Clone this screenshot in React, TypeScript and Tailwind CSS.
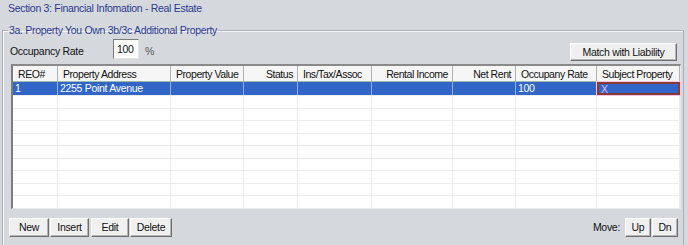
import React from 'react';

const navy = 'text-[#2b3990]';

const columns = [
  { label: 'REO#', w: 'w-[45px]', align: 'text-left' },
  { label: 'Property Address', w: 'w-[113px]', align: 'text-left' },
  { label: 'Property Value', w: 'w-[73px]', align: 'text-left' },
  { label: 'Status', w: 'w-[54px]', align: 'text-right' },
  { label: 'Ins/Tax/Assoc', w: 'w-[74px]', align: 'text-left' },
  { label: 'Rental Income', w: 'w-[81px]', align: 'text-right' },
  { label: 'Net Rent', w: 'w-[63px]', align: 'text-right' },
  { label: 'Occupany Rate', w: 'w-[81px]', align: 'text-left' },
  { label: 'Subject Property', w: 'w-[83px]', align: 'text-left' },
];

const selected = ['1', '2255 Point Avenue', '', '', '', '', '', '100', 'X'];

function WinButton({ children, className = '' }: { children: React.ReactNode; className?: string }) {
  return (
    <button
      className={`flex items-center justify-center bg-[#f0f0f0] border border-t-white border-l-white border-r-[#6e6e6e] border-b-[#6e6e6e] shadow-[inset_-1px_-1px_0_#b4b4b4] text-[#111] ${className}`}
    >
      {children}
    </button>
  );
}

export default function App() {
  return (
    <div
      className="w-[688px] h-[245px] overflow-hidden bg-[#d5d9de] text-[10.5px] tracking-[-0.3px] leading-[12px] text-[#111]"
      style={{ fontFamily: '"Liberation Sans", Arial, sans-serif' }}
    >
      <div className={`h-[24px] pl-[8px] pt-[2px] ${navy}`}>Section 3: Financial Infomation - Real Estate</div>

      <fieldset className="ml-[2px] mr-[4px] border border-[#aab1ba] shadow-[inset_1px_1px_0_#f6f7f9]">
        <legend className={`ml-[5px] px-[1px] ${navy}`}>3a. Property You Own 3b/3c Additional Property</legend>

        <div className="flex h-[22px] mt-[3px] pl-[7px] pr-[6px]">
          <span className="self-center mt-[1px] w-[103px]">Occupancy Rate</span>
          <div className="self-start h-[20px] w-[26px] bg-white border border-t-[#7a7a7a] border-l-[#7a7a7a] border-r-[#e4e4e4] border-b-[#e4e4e4] pl-[3px] pt-[3px]">
            100
          </div>
          <span className="self-center mt-[1px] ml-[6px] text-[#555]">%</span>
          <WinButton className="ml-auto self-end h-[18px] w-[107px]">Match with Liability</WinButton>
        </div>

        <div className="mt-[3px] ml-[8px] mr-[2px] bg-white border-l-2 border-t-2 border-l-[#7d7d7d] border-t-[#8a8a8a] border-r border-b border-r-[#e9e9e9] border-b-[#e9e9e9]">
          <div className="flex h-[16px] border-b border-b-[#9fbca6] bg-[#f6f6f6] tracking-[-0.45px]">
            {columns.map((c) => (
              <div
                key={c.label}
                className={`${c.w} ${c.align} shrink-0 pl-[5px] pr-[4px] pt-[2px] border-r border-r-[#b2b2b2] overflow-hidden whitespace-nowrap`}
              >
                {c.label}
              </div>
            ))}
          </div>
          <div className="flex h-[13px] bg-[#3166c8] text-white">
            {columns.map((c, i) =>
              i === 8 ? (
                <div key={c.label} className={`${c.w} shrink-0 border-2 border-[#8c3a2f] shadow-[0_0_0_1px_#f3c6ee] pl-[2px] leading-[10px] text-[#e6b6ff]`}>
                  {selected[i]}
                </div>
              ) : (
                <div key={c.label} className={`${c.w} shrink-0 pl-[2px] border-r border-r-[#8fb1e6]`}>
                  {selected[i]}
                </div>
              )
            )}
          </div>
          {Array.from({ length: 9 }).map((_, r) => (
            <div key={r} className="flex h-[12.5px] border-t border-t-[#ececec]">
              {columns.map((c) => (
                <div key={c.label} className={`${c.w} shrink-0 border-r border-r-[#ececec]`} />
              ))}
            </div>
          ))}
        </div>

        <div className="flex items-center mt-[9px] pl-[6px] pr-[5px] h-[19px] mb-[10px]">
          <WinButton className="w-[40px] h-[19px]">New</WinButton>
          <WinButton className="w-[39px] h-[19px] ml-[1px]">Insert</WinButton>
          <WinButton className="w-[38px] h-[19px] ml-[2px]">Edit</WinButton>
          <WinButton className="w-[42px] h-[19px] ml-[1px]">Delete</WinButton>
          <span className="ml-auto mr-[5px]">Move:</span>
          <WinButton className="w-[26px] h-[19px]">Up</WinButton>
          <WinButton className="w-[26px] h-[19px] ml-[1px]">Dn</WinButton>
        </div>
      </fieldset>
    </div>
  );
}
